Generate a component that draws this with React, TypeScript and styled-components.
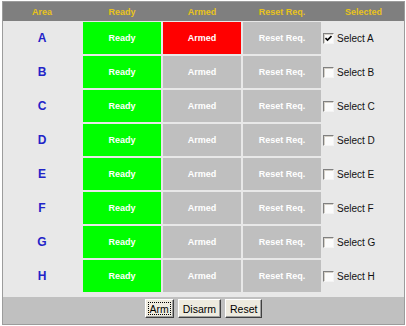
import { Fragment } from 'react';
import styled, { createGlobalStyle } from 'styled-components';

type Status = 'ready' | 'armed' | 'idle';

interface StatusCellProps {
  $status: Status;
}

const GlobalStyle = createGlobalStyle`
  body {
    margin: 0;
    background: #fff;
    font-family: 'Liberation Sans', Arial, sans-serif;
  }
`;

const columns = '78px 78px 78px 78px 81px';

const Panel = styled.div`
  margin: 1px 0 0 2px;
  width: 401px;
  border: 1px solid #9c9c9c;
  background: #e8e8e8;
`;

const HeaderRow = styled.div`
  display: grid;
  grid-template-columns: ${columns};
  column-gap: 2px;
  height: 19px;
  background: #7f7f7f;
  align-items: center;
`;

const HeaderCell = styled.div`
  text-align: center;
  font-size: 9px;
  font-weight: 700;
  color: #e8c31c;
`;

const Body = styled.div`
  display: grid;
  grid-template-columns: ${columns};
  grid-auto-rows: 32px;
  gap: 2px;
  padding: 1px 0 5px;
`;

const AreaCell = styled.div`
  display: flex;
  align-items: center;
  justify-content: center;
  font-size: 12px;
  font-weight: 700;
  color: #2323c8;
`;

const StatusCell = styled.div<StatusCellProps>`
  display: flex;
  align-items: center;
  justify-content: center;
  font-size: 9px;
  font-weight: 700;
  color: #fff;
  background: ${(props) =>
    props.$status === 'ready'
      ? '#00ff00'
      : props.$status === 'armed'
      ? '#ff0000'
      : '#bfbfbf'};
`;

const SelectCell = styled.label`
  display: flex;
  align-items: center;
  gap: 3px;
  padding-left: 0;
  font-size: 10px;
  color: #111;
`;

const Box = styled.span`
  width: 9px;
  height: 9px;
  display: inline-flex;
  align-items: center;
  justify-content: center;
  background: #fbfbfb;
  border-top: 1px solid #808080;
  border-left: 1px solid #808080;
  border-right: 1px solid #f4f4f4;
  border-bottom: 1px solid #f4f4f4;
  box-shadow: inset 1px 1px 0 #d4d0c8;
`;

const Footer = styled.div`
  display: flex;
  justify-content: center;
  gap: 4px;
  height: 27px;
  padding-top: 2px;
  box-sizing: border-box;
  background: #c0c0c0;
`;

const Button = styled.button<{ $focused?: boolean }>`
  height: 19px;
  padding: 0 4px;
  font-family: 'Liberation Sans', Arial, sans-serif;
  font-size: 10.5px;
  color: #000;
  background: #eeebdf;
  border: 1px solid;
  border-color: #fff #404040 #404040 #fff;
  box-shadow: inset -1px -1px 0 #a0a0a0;
  outline: ${(props) => (props.$focused ? '1px dotted #000' : 'none')};
  outline-offset: -4px;
`;

const areas = ['A', 'B', 'C', 'D', 'E', 'F', 'G', 'H'];

const CheckMark = () => (
  <svg width="7" height="7" viewBox="0 0 7 7">
    <path d="M0.5 3 L2.5 5 L6.5 1" stroke="#000" strokeWidth="1.6" fill="none" />
  </svg>
);

export default function App() {
  return (
    <>
      <GlobalStyle />
      <Panel>
        <HeaderRow>
          <HeaderCell>Area</HeaderCell>
          <HeaderCell>Ready</HeaderCell>
          <HeaderCell>Armed</HeaderCell>
          <HeaderCell>Reset Req.</HeaderCell>
          <HeaderCell>Selected</HeaderCell>
        </HeaderRow>
        <Body>
          {areas.map((area, i) => (
            <Fragment key={area}>
              <AreaCell>{area}</AreaCell>
              <StatusCell $status="ready">Ready</StatusCell>
              <StatusCell $status={i === 0 ? 'armed' : 'idle'}>Armed</StatusCell>
              <StatusCell $status="idle">Reset Req.</StatusCell>
              <SelectCell>
                <Box>{i === 0 && <CheckMark />}</Box>
                Select {area}
              </SelectCell>
            </Fragment>
          ))}
        </Body>
        <Footer>
          <Button $focused>Arm</Button>
          <Button>Disarm</Button>
          <Button>Reset</Button>
        </Footer>
      </Panel>
    </>
  );
}
